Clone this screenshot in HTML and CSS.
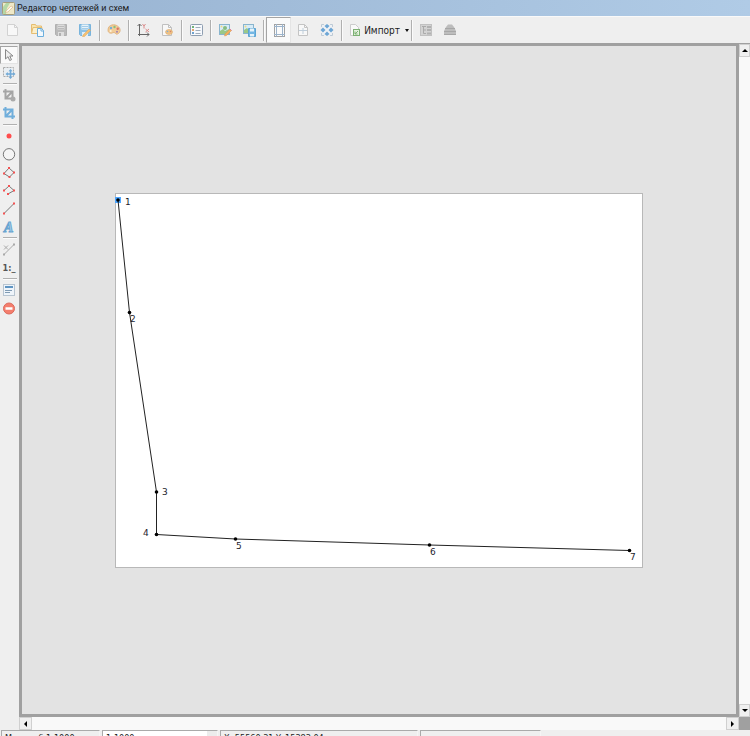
FILE: index.html
```html
<!DOCTYPE html>
<html lang="ru">
<head>
<meta charset="utf-8">
<title>Редактор чертежей и схем</title>
<link rel="stylesheet" href="styles.css">
</head>
<body>
<div class="app">
  <header class="titlebar">
    <svg class="title-icon" viewBox="0 0 13 13"><rect x=".5" y=".5" width="12" height="12" rx="1" fill="#efe9c8" stroke="#a59d7c"/><path d="M1 12V5l3-4h4L5 6l-1 6z" fill="#b4d8a6"/><path d="M3 10l6-6 2 1-5 5z" fill="#fbfaf0" stroke="#d9a36c" stroke-width=".5"/></svg>
    <h1>Редактор чертежей и схем</h1>
  </header>

  <div class="toolbar" role="toolbar" aria-label="Главная">
    <button class="tool" aria-label="Создать"><svg viewBox="0 0 14 14"><path d="M1.500 1.500h7l3 3v8h-10z" fill="#fafafa" stroke="#cfcfcf"/><path d="M8.500 1.500v3h3" fill="none" stroke="#cfcfcf"/></svg></button>
    <button class="tool" aria-label="Открыть"><svg viewBox="0 0 14 14"><path d="M1.500 9.500v-8h4l1 1.500h5v6.500z" fill="#fbe3a6" stroke="#e5b864"/><path d="M1.500 10.500l1.500-6h9v6z" fill="#fdefc8" stroke="#e5b864"/><path d="M7.500 5.500h4l2 2v6h-6z" fill="#f3faff" stroke="#5ea9dc"/><path d="M11 5.500V8h2.500" fill="none" stroke="#5ea9dc"/></svg></button>
    <button class="tool" aria-label="Сохранить" disabled><svg viewBox="0 0 14 14"><path d="M1.500 1.500h11v11h-10l-1-1z" fill="#b5b5b5" stroke="#aaa"/><path d="M3.500 1.500h7v5h-7z" fill="#dadada"/><path d="M4 3.500h6M4 5.500h6" stroke="#b5b5b5"/><path d="M4 9h6v4H4z" fill="#ddd"/><path d="M5 10h2v3H5z" fill="#aaa"/></svg></button>
    <button class="tool" aria-label="Сохранить как"><svg viewBox="0 0 14 14"><path d="M1.500 1.500h11v11h-10l-1-1z" fill="#82bde6" stroke="#6daedb"/><path d="M3.500 1.500h7v5h-7z" fill="#e6f3fb"/><path d="M4 3.500h6M4 5.500h6" stroke="#9cc9e8"/><path d="M4 9h6v4H4z" fill="#dceefa"/><path d="M5 12l6-6 1.500 1.500-6 6-2 .3z" fill="#f6bb65" stroke="#dda04d" stroke-width=".5"/></svg></button>
    <span class="sep"></span>
    <button class="tool" aria-label="Палитра"><svg viewBox="0 0 14 14"><path d="M1 7C1 1 8 1 10.500 3c4 2.500 3 7 0 8-2 .8-2-1.500-3.500-1.500S5 10.500 3.500 10.200 1 9 1 7z" fill="#f3c98f" stroke="#dca76a" stroke-width=".8"/><circle cx="4" cy="5" r="1.200" fill="#69a8d8"/><circle cx="7.500" cy="4" r="1.200" fill="#7fbd71"/><circle cx="10.700" cy="5.800" r="1.200" fill="#d76759"/><circle cx="3.700" cy="8" r="1" fill="#fff5d8"/><circle cx="10" cy="8.800" r="1" fill="#9b77aa"/></svg></button>
    <span class="sep"></span>
    <button class="tool" aria-label="Оси координат"><svg viewBox="0 0 14 14"><path d="M3.500 1v12M2 11.500h11" stroke="#585858" fill="none"/><path d="M1.500 3l2-2 2 2M11 9.500l2 2-2 2" stroke="#585858" fill="none"/><path d="M6.500 1l1.500 2 1.500-2M8 3v2.500M9.500 6l3.500 3M13 6l-3.500 3" stroke="#d98080" fill="none"/></svg></button>
    <button class="tool" aria-label="Стиль листа"><svg viewBox="0 0 14 14"><path d="M2.500 1.500h6l3 3v8h-9z" fill="#fafafa" stroke="#bcbcbc"/><path d="M8.500 1.500v3h3" fill="none" stroke="#bcbcbc"/><ellipse cx="9" cy="9" rx="3.500" ry="2.500" fill="#efbd79" stroke="#dda25c" stroke-width=".6"/><circle cx="7.500" cy="8.500" r=".8" fill="#76a9d1"/><circle cx="10.500" cy="8.500" r=".8" fill="#cf7a61"/></svg></button>
    <span class="sep"></span>
    <button class="tool" aria-label="Свойства"><svg viewBox="0 0 14 14"><rect x="1.500" y="1.500" width="12" height="11" rx="1" fill="#f8fbff" stroke="#8496ab"/><path d="M3 4h2" stroke="#64ad69" stroke-width="2"/><path d="M3 7h2" stroke="#e49f61" stroke-width="2"/><path d="M3 10h2" stroke="#5f99ca" stroke-width="2"/><path d="M6.500 4.500h5M6.500 7.500h5M6.500 10.500h5" stroke="#98a7b7"/></svg></button>
    <span class="sep"></span>
    <button class="tool" aria-label="Изменить рисунок"><svg viewBox="0 0 14 14"><rect x="1.500" y="1.500" width="10" height="10" fill="#d5ecfa" stroke="#7eafcb"/><path d="M2 11V8l3-2 2 2 4-2v5z" fill="#91c47d"/><circle cx="7" cy="5" r="2" fill="#7db873"/><circle cx="3.500" cy="3.500" r="1" fill="#f3d876"/><path d="M6.500 13l.5-2 5-5 1.500 1.500-5 5z" fill="#f3a94e" stroke="#d88c43" stroke-width=".5"/><path d="M12 6l1.500 1.500" stroke="#d8799b"/></svg></button>
    <button class="tool" aria-label="Сохранить рисунок"><svg viewBox="0 0 14 14"><rect x="1.500" y="1.500" width="10" height="9" fill="#d5ecfa" stroke="#7eafcb"/><path d="M2 10V7l3-2 2 2 4-2v5z" fill="#91c47d"/><circle cx="3.500" cy="3.500" r="1" fill="#f3d876"/><path d="M6.500 5.500h7v8h-7z" fill="#67b2e3" stroke="#4c9dd1"/><path d="M8 5.500h4v3H8zM8 11h4v2.500H8z" fill="#e5f4fc"/></svg></button>
    <span class="sep"></span>
    <button class="tool wide pressed" aria-label="Поля листа" aria-pressed="true"><svg viewBox="0 0 14 14"><rect x="2.500" y="1.500" width="10" height="12" fill="#fcfcfc" stroke="#999"/><path d="M4.500 1v12.500M10.500 1v12.500M2 3.500h11M2 11.500h11" stroke="#93adc6" fill="none"/></svg></button>
    <button class="tool" aria-label="Разрыв листа"><svg viewBox="0 0 14 14"><path d="M2.500 1.500h6l3 3v8h-9z" fill="#fafafa" stroke="#c0c0c0"/><path d="M8.500 1.500v3h3" fill="none" stroke="#c0c0c0"/><path d="M3 7.500h8M7 5v6" stroke="#b9cad8"/></svg></button>
    <button class="tool" aria-label="По размеру окна"><svg viewBox="0 0 14 14"><path d="M1.500 4V1.500H4M10 1.500h2.500V4M12.500 10v2.500H10M4 12.500H1.500V10" fill="none" stroke="#b7c6d4"/><path d="M2.500 2.500l9 9M11.500 2.500l-9 9" stroke="#eef3f7" stroke-width="2"/><path d="M7 5.500L4.500 3 7 1l2.500 2zM7 8.500L4.500 11 7 13l2.500-2zM5.500 7L3 4.500 .5 7 3 9.500zM8.500 7L11 4.500 13.500 7 11 9.500z" fill="#5f9fd3"/></svg></button>
    <span class="sep"></span>
    <button class="tool menu"><svg viewBox="0 0 14 14"><path d="M2.500 1.500h5l3 3v8h-8z" fill="#fbfbfb" stroke="#c9c9c9"/><rect x="5.500" y="6.500" width="6" height="6" fill="#e2f1dc" stroke="#70aa66"/><path d="M7 11l3-3M7 8.500V11h2.500" fill="none" stroke="#70aa66"/></svg><span>Импорт</span><i class="caret"></i></button>
    <span class="sep"></span>
    <button class="tool" aria-label="Структура" disabled><svg viewBox="0 0 14 14"><rect x="1.500" y="1.500" width="11" height="11" fill="#d1d1d1" stroke="#bdbdbd"/><path d="M3 3.500h4M4.500 4v6.500H7M4.500 7H7" stroke="#a3a3a3" fill="none"/><path d="M8 7h4M8 10.500h4M8 4h4" stroke="#ababab" stroke-width="2"/></svg></button>
    <button class="tool" aria-label="Слои" disabled><svg viewBox="0 0 14 14"><path d="M3 4l2-2.500h4L11 4l2 4v4H1V8z" fill="#b8b8b8"/><path d="M2 5.500h10M1 8.500h12M1 11.500h12" stroke="#a0a0a0"/></svg></button>
  </div>

  <div class="workspace">
    <div class="sidebar" role="toolbar" aria-label="Инструменты">
      <button class="side pressed" aria-label="Выбор" aria-pressed="true"><svg viewBox="0 0 14 14"><path d="M3.500 1.500v9.500l2.500-2.300 1.700 3.800 1.800-.8-1.700-3.700h3.200z" fill="#eee" stroke="#888"/></svg></button>
      <button class="side" aria-label="Переместить"><svg viewBox="0 0 14 14"><rect x="1.500" y="1.500" width="10" height="9" fill="#e9eef2" stroke="#aaa" stroke-dasharray="2 1"/><path d="M8.500 3l2 2.300H9.300v1.900h1.900V6l2.300 2-2.300 2V8.800H9.300v1.900h1.200l-2 2.300-2-2.300h1.200V8.800H5.800V10L3.500 8l2.300-2v1.200h1.900V5.300H6.500z" fill="#71a9d6"/></svg></button>
      <span class="rule"></span>
      <button class="side" aria-label="Сбросить обрезку"><svg viewBox="0 0 14 14"><path d="M3.500 0v9.500H12M1 2.500h9.500V10M4 9l6-6" fill="none" stroke="#a5a5a5" stroke-width="2"/><circle cx="11" cy="10" r="2.500" fill="#aaa"/></svg></button>
      <button class="side" aria-label="Обрезать"><svg viewBox="0 0 14 14"><path d="M3.500 0v9.500H13M1 2.500h9.500V12M4 9l6-6" fill="none" stroke="#70aedb" stroke-width="2"/></svg></button>
      <span class="rule"></span>
      <button class="side" aria-label="Точка"><svg viewBox="0 0 14 14"><circle cx="7" cy="6" r="2.500" fill="#ff4d4d"/></svg></button>
      <button class="side" aria-label="Окружность"><svg viewBox="0 0 14 14"><circle cx="7" cy="6.300" r="5.700" fill="#f5f5f5" stroke="#777"/></svg></button>
      <button class="side" aria-label="Полигон"><svg viewBox="0 0 14 14"><path d="M7 2l5 4.500-4.500 4.500L2 7.500z" fill="none" stroke="#777"/><path d="M6 1h2v2H6zM11 5.500h2v2h-2zM6.500 10h2v2h-2zM1 6.500h2v2H1z" fill="#f35353"/></svg></button>
      <button class="side" aria-label="Полилиния"><svg viewBox="0 0 14 14"><path d="M2 6.500L7 2l5 4.500L6 10" fill="none" stroke="#777"/><path d="M1 5.500h2v2H1zM6 1h2v2H6zM11 5.500h2v2h-2zM5 9h2v2H5z" fill="#f35353"/></svg></button>
      <button class="side" aria-label="Отрезок"><svg viewBox="0 0 14 14"><path d="M2 11.500L12 1.500" stroke="#777"/><path d="M1 10.500h2v2H1zM11 .5h2v2h-2z" fill="#f35353"/></svg></button>
      <button class="side" aria-label="Текст"><svg class="letter" viewBox="0 0 14 14"><text x="2" y="12">A</text></svg></button>
      <span class="rule"></span>
      <button class="side" aria-label="Размер"><svg viewBox="0 0 14 14"><path d="M2 11.500L12 1.500M2 2.500l4 4M6 2.500L2 6.500" stroke="#aaa" fill="none"/><path d="M1 10.500h2v2H1zM11 .5h2v2h-2z" fill="#aaa"/></svg></button>
      <button class="side scale" aria-label="Масштаб">1:_</button>
      <span class="rule"></span>
      <button class="side" aria-label="Таблица"><svg viewBox="0 0 14 14"><rect x="1.500" y=".5" width="11" height="11" fill="#eef4fa" stroke="#8299af" stroke-dasharray="1 1"/><path d="M3 3h8" stroke="#5f94c2" stroke-width="2"/><path d="M3 6.500h7M3 8.500h5" stroke="#809bb4"/></svg></button>
      <button class="side" aria-label="Удалить"><svg viewBox="0 0 14 14"><circle cx="7" cy="6.500" r="5.500" fill="#f47e6d" stroke="#dc6b5e"/><path d="M3.500 6.500h7" stroke="#fff" stroke-width="2.500"/></svg></button>
    </div>

    <main class="canvas">
      <svg class="paper" viewBox="0 0 528 375" role="img" aria-label="Чертёж">
        <rect class="sheet" x=".5" y=".5" width="527" height="374"/>
        <rect class="selected" x="0" y="4" width="6" height="6"/>
        <polyline points="3,7 14.500,119.500 41.500,299 41.500,341.500 120.500,346 314.500,352 514.500,357.500"/>
        <g class="nodes"><circle cx="3" cy="7" r="1.800"/><circle cx="14.500" cy="119.500" r="1.800"/><circle cx="41.500" cy="299" r="1.800"/><circle cx="41.500" cy="341.500" r="1.800"/><circle cx="120.500" cy="346" r="1.800"/><circle cx="314.500" cy="352" r="1.800"/><circle cx="514.500" cy="357.500" r="1.800"/></g>
        <g class="labels"><text x="10" y="12">1</text><text x="15" y="129">2</text><text x="47" y="302">3</text><text x="28" y="343">4</text><text x="121" y="356">5</text><text x="315" y="362">6</text><text x="515" y="367">7</text></g>
      </svg>
    </main>

    <div class="scroll vertical"><button class="up" aria-label="Вверх"></button><button class="down" aria-label="Вниз"></button></div>
    <div class="scroll horizontal"><button class="left" aria-label="Влево"></button><button class="right" aria-label="Вправо"></button></div>
    <div class="corner"></div>
  </div>

  <footer class="statusbar">
    <span class="cell">Масштаб 1:1000</span>
    <select class="cell" aria-label="Масштаб"><option>1:1000</option></select>
    <span class="cell">X: 55560.31 Y: 15383.04</span>
    <span class="cell"></span>
  </footer>
</div>
</body>
</html>
```
FILE: styles.css
```css
* { box-sizing: border-box; }

body {
  margin: 0;
  font-family: "DejaVu Sans Condensed", "DejaVu Sans", sans-serif;
  font-size: 9px;
  color: #1c1c1c;
}

.app {
  display: grid;
  grid-template-rows: 16px 27px 1fr 6px;
  height: 100vh;
  overflow: hidden;
  background: #efefef;
}

button {
  margin: 0;
  padding: 0;
  border: 0;
  background: none;
  font: inherit;
  color: inherit;
}

.titlebar {
  display: flex;
  align-items: center;
  gap: 2px;
  padding-left: 2px;
  background: linear-gradient(90deg, #98b3d1, #b0cbe6);
}

.title-icon { width: 13px; height: 13px; }

h1 {
  margin: 0;
  font-family: Roboto, "Liberation Sans", sans-serif;
  font-size: 9px;
  font-weight: normal;
  line-height: 16px;
}

.toolbar {
  display: flex;
  align-items: stretch;
  padding-left: 1px;
  border-top: 1px solid #f9f9f9;
}

.tool {
  display: flex;
  align-items: center;
  justify-content: center;
  flex: none;
  width: 24px;
}

.tool.wide { width: 25px; }

.tool svg { width: 14px; height: 14px; opacity: 0.9; }

.tool.menu {
  justify-content: flex-end;
  width: 65px;
  gap: 2px;
  font-size: 10px;
}

.caret {
  margin-left: 3px;
  border: 2px solid transparent;
  border-top: 3px solid #111;
  border-bottom: 0;
}

.pressed {
  background: #fafafa;
  border: 1px solid #e4e4e4;
  border-top-color: #a4a4a4;
  border-left-color: #a4a4a4;
}

.sep {
  flex: none;
  width: 2px;
  margin: 3px 1px 2px 2px;
  border-left: 1px solid #b0b0b0;
  border-right: 1px solid #fbfbfb;
}

.workspace {
  display: grid;
  grid-template-columns: 19px 1fr 11px;
  grid-template-rows: 1fr 13px;
  min-height: 0;
  border-top: 1px solid #a0a0a0;
}

.sidebar {
  grid-row: 1 / 3;
  display: flex;
  flex-direction: column;
  padding: 2px 1px 0 0;
}

.side {
  display: flex;
  align-items: center;
  justify-content: center;
  flex: none;
  height: 18px;
}

.side svg { width: 14px; height: 14px; }

.letter text {
  font: italic bold 14px "Liberation Serif", serif;
  fill: #aed5f1;
  stroke: #6aa5d0;
}

.scale {
  font-weight: bold;
  color: #555;
}

.rule {
  flex: none;
  height: 2px;
  margin: 1px 1px 2px 3px;
  border-top: 1px solid #b0b0b0;
  border-bottom: 1px solid #fbfbfb;
}

.canvas {
  display: flex;
  align-items: center;
  justify-content: center;
  min-width: 0;
  min-height: 0;
  background: #e3e3e3;
  border: 3px solid #a0a0a0;
  border-top-width: 2px;
}

.paper {
  flex: none;
  width: 528px;
  height: 375px;
}

.sheet { fill: #fff; stroke: #b8b8b8; }
.selected { fill: #4da6ff; }
polyline { fill: none; stroke: #222; stroke-width: 1; }
.nodes { fill: #000; }
.labels { font-family: "DejaVu Sans", sans-serif; font-size: 9px; fill: #1c1c2c; }

.scroll {
  display: flex;
  justify-content: space-between;
  background: #f9f9f9;
}

.vertical { flex-direction: column; }
.horizontal { grid-column: 2; }
.corner { background: #a0a0a0; }

.scroll button {
  display: flex;
  align-items: center;
  justify-content: center;
  flex: none;
  width: 13px;
  height: 13px;
  background: #f0f0f0;
  border: 1px solid #d0d0d0;
}

.vertical button { width: 11px; }

.scroll button::before {
  content: "";
  border: 3px solid transparent;
}

.scroll .up::before { border-top: 0; border-bottom-color: #000; }
.scroll .down::before { border-bottom: 0; border-top-color: #000; }
.scroll .left::before { border-left: 0; border-right-color: #000; }
.scroll .right::before { border-right: 0; border-left-color: #000; }

.statusbar {
  display: grid;
  grid-template-columns: 99px 116px 198px 121px;
  gap: 2px;
  padding-left: 1px;
  overflow: hidden;
}

.cell {
  height: 16px;
  margin: 0;
  padding: 0 3px;
  border: 1px solid #aaa;
  border-right-color: #f5f5f5;
  font: inherit;
  line-height: 14px;
  white-space: nowrap;
  color: inherit;
}

select.cell {
  appearance: none;
  background: linear-gradient(90deg, #fff 104px, #ececec 104px);
  border-radius: 0;
}
```
